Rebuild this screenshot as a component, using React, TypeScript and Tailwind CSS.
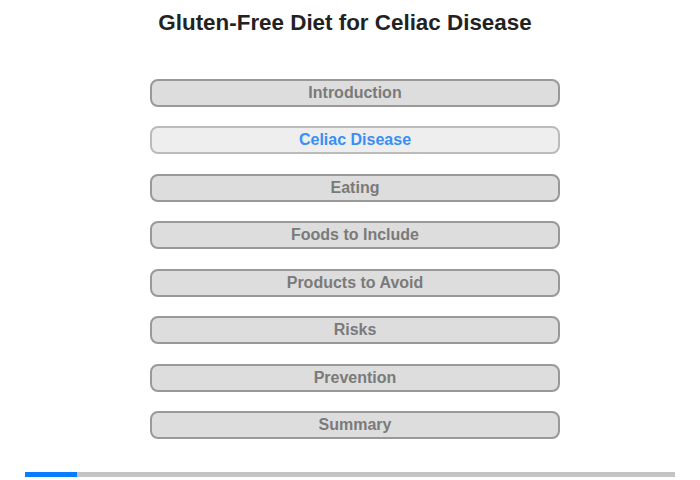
import React from "react";

const items = [
  "Introduction",
  "Celiac Disease",
  "Eating",
  "Foods to Include",
  "Products to Avoid",
  "Risks",
  "Prevention",
  "Summary",
];

export default function App() {
  return (
    <div
      className="w-[700px] h-[480px] bg-white relative overflow-hidden"
      style={{ fontFamily: '"Liberation Sans", Arial, sans-serif' }}
    >
      <div className="pt-[10px] w-[690px] text-center text-[22.4px] leading-[26px] font-bold text-[#222]">
        Gluten-Free Diet for Celiac Disease
      </div>
      <div className="mt-[43px] ml-[150px] w-[410px] flex flex-col gap-[19.43px]">
        {items.map((t, i) => (
          <div
            key={t}
            className={
              i === 1
                ? "h-[28px] rounded-[8px] border-2 border-[#bbbbbb] bg-[#eeeeee] flex items-center justify-center text-[16px] font-bold text-[#3a8ef5]"
                : "h-[28px] rounded-[8px] border-2 border-[#999999] bg-[#dddddd] flex items-center justify-center text-[16px] font-bold text-[#7a7a7a]"
            }
          >
            {t}
          </div>
        ))}
      </div>
      <div className="absolute left-[25px] top-[472px] w-[650px] h-[5px] bg-[#c4c4c4] flex">
        <div className="w-[52px] h-full bg-[#0a7cff]" />
      </div>
    </div>
  );
}
